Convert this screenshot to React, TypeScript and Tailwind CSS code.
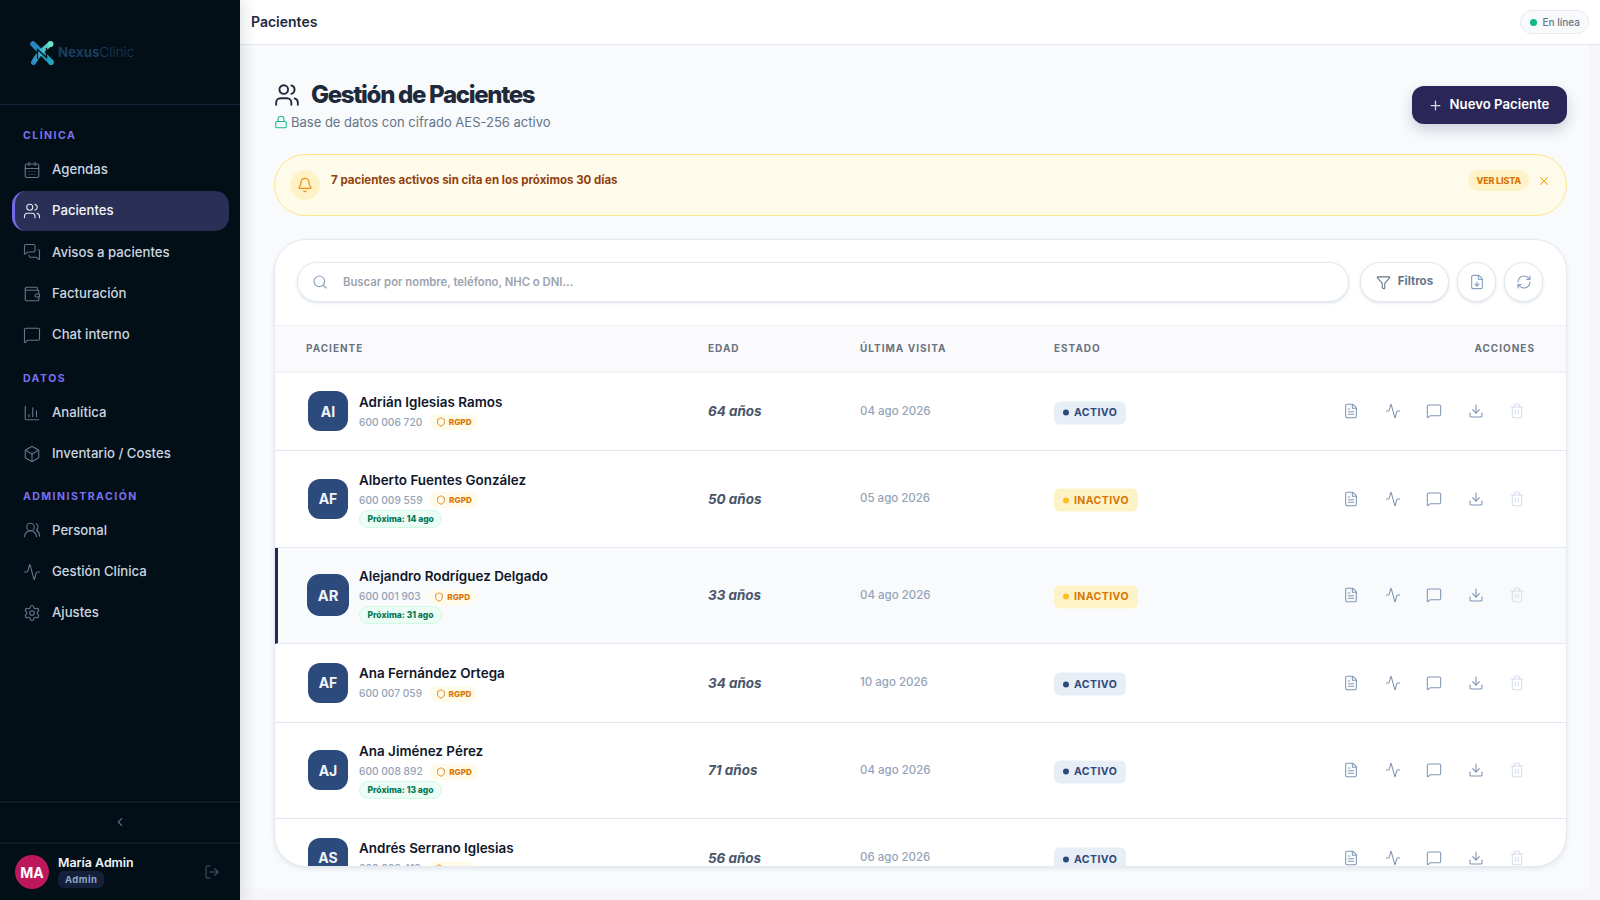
import {
  Activity,
  Bell,
  Box,
  CalendarDays,
  ChartColumn,
  ChevronLeft,
  Download,
  FileDown,
  FileText,
  Funnel,
  Lock,
  LogOut,
  MessageSquare,
  MessagesSquare,
  Plus,
  RefreshCw,
  Search,
  Settings,
  Shield,
  Trash2,
  Users,
  UsersRound,
  Wallet,
  X,
} from 'lucide-react'

const navSections = [
  {
    title: 'CLÍNICA',
    gap: '',
    items: [
      { label: 'Agendas', icon: CalendarDays },
      { label: 'Pacientes', icon: Users, active: true },
      { label: 'Avisos a pacientes', icon: MessagesSquare },
      { label: 'Facturación', icon: Wallet },
      { label: 'Chat interno', icon: MessageSquare },
    ],
  },
  {
    title: 'DATOS',
    gap: 'mt-[17px]',
    items: [
      { label: 'Analítica', icon: ChartColumn },
      { label: 'Inventario / Costes', icon: Box },
    ],
  },
  {
    title: 'ADMINISTRACIÓN',
    gap: 'mt-[16px]',
    items: [
      { label: 'Personal', icon: UsersRound },
      { label: 'Gestión Clínica', icon: Activity },
      { label: 'Ajustes', icon: Settings },
    ],
  },
]

const patients = [
  { initials: 'AI', name: 'Adrián Iglesias Ramos', phone: '600 006 720', age: '64 años', last: '04 ago 2026', active: true },
  { initials: 'AF', name: 'Alberto Fuentes González', phone: '600 009 559', age: '50 años', last: '05 ago 2026', active: false, next: '14 ago' },
  { initials: 'AR', name: 'Alejandro Rodríguez Delgado', phone: '600 001 903', age: '33 años', last: '04 ago 2026', active: false, next: '31 ago', selected: true },
  { initials: 'AF', name: 'Ana Fernández Ortega', phone: '600 007 059', age: '34 años', last: '10 ago 2026', active: true },
  { initials: 'AJ', name: 'Ana Jiménez Pérez', phone: '600 008 892', age: '71 años', last: '04 ago 2026', active: true, next: '13 ago' },
  { initials: 'AS', name: 'Andrés Serrano Iglesias', phone: '600 003 418', age: '56 años', last: '06 ago 2026', active: true },
]

function Logo() {
  return (
    <div className="flex items-center gap-[3px] pt-[2px]">
      <svg width="26" height="26" viewBox="0 0 26 26" fill="none">
        <defs>
          <linearGradient id="logoA" x1="2" y1="2" x2="24" y2="24" gradientUnits="userSpaceOnUse">
            <stop offset="0" stopColor="#2f7fc1" />
            <stop offset="1" stopColor="#1aa5b8" />
          </linearGradient>
          <linearGradient id="logoB" x1="3" y1="24" x2="23" y2="2" gradientUnits="userSpaceOnUse">
            <stop offset="0" stopColor="#2a86c8" />
            <stop offset="1" stopColor="#5fe0c0" />
          </linearGradient>
        </defs>
        <path d="M4 4 L22 22" stroke="url(#logoA)" strokeWidth="5.5" strokeLinecap="round" />
        <path d="M4.5 22.5 C8 16 12 11 20 5" stroke="url(#logoB)" strokeWidth="5" strokeLinecap="round" />
        <path d="M8.5 19 V9.5 L17.5 17.5 V8" stroke="#03141d" strokeWidth="1.3" fill="none" />
        <circle cx="21.5" cy="4" r="3" fill="#6be3c6" />
        <circle cx="22" cy="22.5" r="2.6" fill="#1fa6ba" />
      </svg>
      <span className="text-[13.2px] tracking-[0.01em] text-[#1c3d5e]">
        <span className="font-bold">Nexus</span>
        <span className="font-light">Clinic</span>
      </span>
    </div>
  )
}

function Sidebar() {
  return (
    <aside className="relative z-10 flex h-full w-[240px] shrink-0 flex-col bg-[#020f16] shadow-[4px_0_14px_rgba(15,23,42,0.12)]">
      <div className="flex h-[105px] shrink-0 items-center border-b border-[#12263a] pl-[29px]">
        <Logo />
      </div>
      <nav className="flex-1 px-3 pt-[24px]">
        {navSections.map(section => (
          <div key={section.title} className={section.gap}>
            <div className="mb-[7px] pl-[11px] text-[10.5px] leading-[14px] font-bold tracking-[0.14em] text-[#7b6ff0]">
              {section.title}
            </div>
            <div className="flex flex-col gap-[2px]">
              {section.items.map(item => {
                const Icon = item.icon
                return (
                  <div
                    key={item.label}
                    className={
                      item.active
                        ? 'flex h-[39.4px] w-[217px] items-center gap-[11px] rounded-[14px] border-l-[3px] border-[#7568e8] bg-[#2a2f56] pl-[8px] text-[13.2px] font-medium text-[#f1f5f9]'
                        : 'flex h-[39.4px] items-center gap-[11px] pl-[11px] text-[13.2px] font-medium text-[#cbd5e1]'
                    }
                  >
                    <Icon size={18} strokeWidth={1.5} className={item.active ? 'text-[#e2e8f0]' : 'text-[#64748b]'} />
                    <span>{item.label}</span>
                  </div>
                )
              })}
            </div>
          </div>
        ))}
      </nav>
      <div className="flex h-[43px] shrink-0 items-center justify-center border-y-2 border-[#0d1d26] pb-[1px]">
        <ChevronLeft size={14} className="text-[#5b6b7f]" />
      </div>
      <div className="flex h-[56px] shrink-0 items-center pl-[15px] pr-[20px]">
        <div className="flex h-[34px] w-[34px] items-center justify-center rounded-full bg-[#be185d] text-[14px] font-bold text-white">
          MA
        </div>
        <div className="ml-[9px] flex-1 pb-[2px]">
          <div className="text-[12.4px] leading-[16px] font-semibold text-[#f1f5f9]">María Admin</div>
          <div className="w-fit rounded-[6px] bg-[#14203a] px-[7px] py-[1px] text-[9.5px] leading-[15px] font-bold tracking-[0.05em] text-[#8ea3c4]">
            Admin
          </div>
        </div>
        <LogOut size={16} strokeWidth={1.6} className="text-[#475569]" />
      </div>
    </aside>
  )
}

function StatusBadge({ active }: { active: boolean }) {
  return (
    <span
      className={
        active
          ? 'inline-flex h-[23px] translate-y-[1.5px] items-center gap-[5px] rounded-[6px] bg-[#e8eef6] px-[9px] text-[10.5px] font-bold tracking-[0.04em] text-[#2d4a7c]'
          : 'inline-flex h-[23px] translate-y-[1.5px] items-center gap-[5px] rounded-[6px] bg-[#fef3c7] px-[9px] text-[10.5px] font-bold tracking-[0.04em] text-[#d97706]'
      }
    >
      <span className={active ? 'h-[6px] w-[6px] rounded-full bg-[#2d4a7c]' : 'h-[6px] w-[6px] rounded-full bg-[#fbbf24]'} />
      {active ? 'ACTIVO' : 'INACTIVO'}
    </span>
  )
}

function PatientRow({ patient }: { patient: (typeof patients)[number] }) {
  return (
    <div
      className={
        patient.selected
          ? 'grid shrink-0 grid-cols-[400px_152px_194px_1fr] items-center border-b border-l-[3px] border-[#e5e7f0] border-l-[#2a2658] bg-[#f8fafc] py-[18.75px] pl-[30px] pr-[32px]'
          : 'grid shrink-0 grid-cols-[400px_152px_194px_1fr] items-center border-b border-[#e5e7f0] py-[18.75px] pl-[33px] pr-[32px]'
      }
    >
      <div className="flex items-center gap-[11px]">
        <div
          className={
            patient.selected
              ? 'flex h-[40px] w-[40px] shrink-0 scale-105 items-center justify-center rounded-[12px] bg-[#2d4a7c] text-[14px] font-bold text-[#f1f5f9]'
              : 'flex h-[40px] w-[40px] shrink-0 items-center justify-center rounded-[12px] bg-[#2d4a7c] text-[14px] font-bold text-[#f1f5f9]'
          }
        >
          {patient.initials}
        </div>
        <div>
          <div className="text-[13.44px] leading-[20px] font-semibold text-[#0f172a]">{patient.name}</div>
          <div className="mt-[2px] flex h-[17px] items-center gap-[7.5px]">
            <span className="text-[10.2px] font-medium text-[#94a3b8]">{patient.phone}</span>
            <span className="flex h-[16px] items-center gap-[3px] rounded-full bg-[#fffbeb] px-[6px] text-[8.2px] font-extrabold text-[#d97706]">
              <Shield size={10} strokeWidth={2} />
              RGPD
            </span>
          </div>
          {patient.next && (
            <div className="mt-[1px] w-fit rounded-full border border-[#d1fae5] bg-[#ecfdf5] px-[7.5px] text-[8.5px] leading-[16px] font-extrabold text-[#047857]">
              Próxima: {patient.next}
            </div>
          )}
        </div>
      </div>
      <div className="text-[13.44px] font-bold text-[#475569] italic">{patient.age}</div>
      <div className="text-[11.5px] font-medium text-[#94a3b8]">{patient.last}</div>
      <div className="flex items-center justify-between">
        <StatusBadge active={patient.active} />
        <div className="flex items-center gap-[25.4px] pr-[9px] text-[#7f95b5]">
          <FileText size={16} strokeWidth={1.6} />
          <Activity size={16} strokeWidth={1.6} />
          <MessageSquare size={16} strokeWidth={1.6} />
          <Download size={16} strokeWidth={1.6} />
          <Trash2 size={16} strokeWidth={1.6} className="text-[#d6dfeb]" />
        </div>
      </div>
    </div>
  )
}

export default function App() {
  return (
    <div className="flex h-screen w-full overflow-hidden bg-[#f5f5fa] font-['Inter',sans-serif]">
      <Sidebar />
      <main className="flex min-w-0 flex-1 flex-col">
        <header className="flex h-[45px] shrink-0 items-center justify-between border-b border-[#e5e7f0] bg-white pl-[11px] pr-[11px]">
          <h2 className="pb-[2px] text-[14px] font-semibold text-[#1e293b]">Pacientes</h2>
          <div className="flex h-[24px] items-center gap-[6px] rounded-full border border-[#e7e9f2] bg-[#f8fafc] pr-[8px] pl-[9px] text-[10px] font-medium text-[#64748b]">
            <span className="h-[7px] w-[7px] rounded-full bg-[#10b981]" />
            En línea
          </div>
        </header>

        <div className="mr-[11px] mb-[11px] flex min-h-0 flex-1 flex-col bg-[#f8fafc] pr-[22px] pb-[22px] pl-[34px]">
          <div className="flex shrink-0 items-start justify-between pt-[35px]">
            <div>
              <div className="flex items-center gap-[11px]">
                <Users size={26} strokeWidth={1.7} className="text-[#1e293b]" />
                <h1 className="text-[24px] leading-[30px] font-extrabold tracking-[-0.055em] text-[#1e293b]">
                  Gestión de Pacientes
                </h1>
              </div>
              <div className="mt-[2px] flex items-center gap-[3px] text-[13px] leading-[20px] text-[#64748b]">
                <Lock size={14} strokeWidth={1.8} className="text-[#10b981]" />
                Base de datos con cifrado AES-256 activo
              </div>
            </div>
            <button
              type="button"
              className="mt-[6px] flex h-[38px] w-[155px] items-center justify-center gap-[7px] rounded-[12px] bg-[#2a2658] pr-[2px] text-[13.2px] font-semibold text-white shadow-[0_6px_14px_rgba(42,38,88,0.2)]"
            >
              <Plus size={15} strokeWidth={2} className="text-[#d7d9e6]" />
              Nuevo Paciente
            </button>
          </div>

          <div className="mt-[22px] flex h-[62px] shrink-0 items-center rounded-[32px] border border-[#fde68a] bg-[#fffbeb] pl-[15px] pr-[15px]">
            <div className="flex h-[30px] w-[30px] items-center justify-center rounded-full bg-[#fef3c7]">
              <Bell size={16} strokeWidth={1.8} className="text-[#f08a12]" />
            </div>
            <div className="ml-[11px] flex flex-1 items-center pb-[9px]">
              <p className="flex-1 text-[11.5px] font-bold text-[#92400e]">
                7 pacientes activos sin cita en los próximos 30 días
              </p>
              <span className="flex h-[21px] items-center rounded-full bg-[#fef3c7] px-[8px] text-[9px] font-extrabold tracking-[-0.02em] text-[#d97706]">
                VER LISTA
              </span>
              <X size={14} strokeWidth={1.8} className="ml-[8px] text-[#f59e0b]" />
            </div>
          </div>

          <section className="mt-[22.5px] flex min-h-0 flex-1 flex-col overflow-hidden rounded-[32px] border border-[#e4e9f2] bg-white shadow-[0_2px_4px_rgba(148,163,184,0.2)]">
            <div className="flex shrink-0 items-center gap-[8px] border-b border-[#f1f1f6] pt-[22.5px] pr-[23px] pb-[22.5px] pl-[22px]">
              <div className="mr-[3px] flex h-[40px] flex-1 items-center rounded-full border border-[#e2e8f0] bg-white pl-[14px] shadow-[0_1px_3px_rgba(148,163,184,0.35)]">
                <Search size={16} strokeWidth={1.7} className="text-[#8ba0bf]" />
                <span className="ml-[15px] text-[11.3px] font-semibold text-[#9ca3af]">
                  Buscar por nombre, teléfono, NHC o DNI...
                </span>
              </div>
              <button
                type="button"
                className="flex h-[40px] w-[89px] items-center justify-center gap-[7px] rounded-full border border-[#e2e8f0] bg-white text-[11.5px] font-bold text-[#64748b] shadow-[0_1px_3px_rgba(148,163,184,0.35)]"
              >
                <Funnel size={15} strokeWidth={1.7} />
                Filtros
              </button>
              <button
                type="button"
                className="flex h-[40px] w-[39px] items-center justify-center rounded-full border border-[#e2e8f0] bg-white text-[#8ba0bf] shadow-[0_1px_3px_rgba(148,163,184,0.35)]"
              >
                <FileDown size={16} strokeWidth={1.7} />
              </button>
              <button
                type="button"
                className="flex h-[40px] w-[39px] items-center justify-center rounded-full border border-[#e2e8f0] bg-white text-[#8ba0bf] shadow-[0_1px_3px_rgba(148,163,184,0.35)]"
              >
                <RefreshCw size={16} strokeWidth={1.7} />
              </button>
            </div>

            <div className="grid h-[47px] shrink-0 grid-cols-[402px_152px_194px_1fr] items-center border-b-2 border-[#f1f1f6] bg-[#fafafc] pr-[31px] pl-[31px] text-[10px] font-bold tracking-[0.1em] text-[#6b7280]">
              <span>PACIENTE</span>
              <span>EDAD</span>
              <span>ÚLTIMA VISITA</span>
              <div className="flex justify-between">
                <span>ESTADO</span>
                <span>ACCIONES</span>
              </div>
            </div>

            <div className="min-h-0 flex-1 overflow-hidden">
              {patients.map(patient => (
                <PatientRow key={patient.name} patient={patient} />
              ))}
            </div>
          </section>
        </div>
      </main>
    </div>
  )
}
